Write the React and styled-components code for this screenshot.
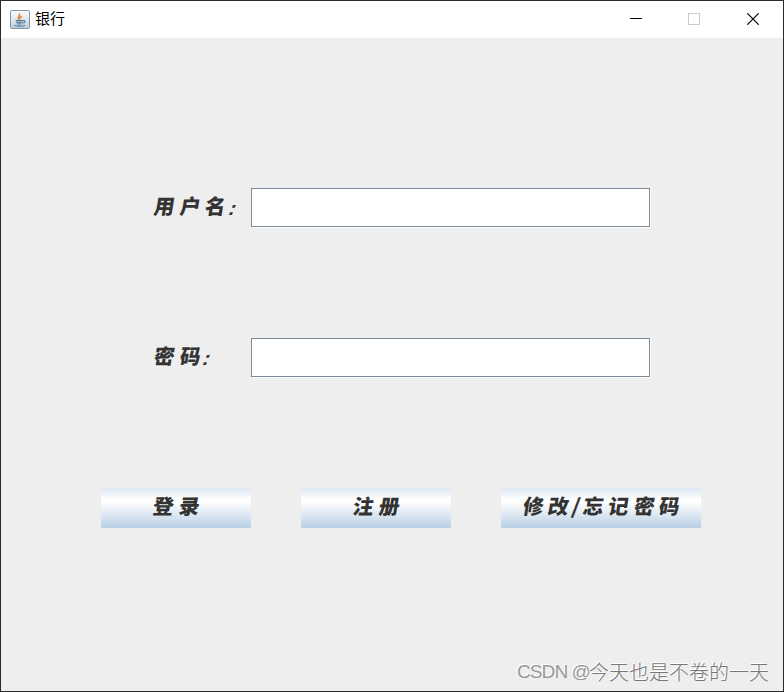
import styled, { createGlobalStyle } from "styled-components";

const fields = [
  { name: "username", label: "用户名" },
  { name: "password", label: "密码" },
];

const actions = [
  { label: "登录", width: 150 },
  { label: "注册", width: 150 },
  { label: "修改/忘记密码", width: 200 },
];

const JavaIcon = () => (
  <svg width="20" height="20" viewBox="0 0 20 20" aria-hidden="true">
    <defs>
      <linearGradient id="tile" x1="0" y1="0" x2="0" y2="1">
        <stop offset="0" stopColor="#fbfcfd" />
        <stop offset="0.5" stopColor="#e2e8ec" />
        <stop offset="1" stopColor="#bccbd6" />
      </linearGradient>
    </defs>
    <rect x="0.5" y="0.5" width="19" height="18" rx="1.5" fill="url(#tile)" stroke="#7f9aad" />
    <path
      d="M9.2 9.4C6.3 7.2 10.8 6.3 9.4 3.3M10 9.6c-1-1.7.2-2.4 2-3.4"
      fill="none"
      stroke="#e8853f"
      strokeWidth="1.6"
    />
    <path
      d="M5.5 10.5h8M6 12.2h6.8M7 13.8h4.5M13 10.5c3-.5 2.2 2.4-.3 2.4M4.3 15.2c2.5 1.4 8.5 1.3 10.6 0"
      fill="none"
      stroke="#557f9f"
      strokeWidth="1.2"
    />
  </svg>
);

const Brush = ({ text }) => (
  <BrushText>
    {[...text].map((char, index) => (
      <Glyph key={index} $narrow={char === "/"}>
        {char}
      </Glyph>
    ))}
  </BrushText>
);

const App = () => {
  return (
    <>
      <GlobalStyle />
      <Window>
        <TitleBar>
          <JavaIcon />
          <Title>银行</Title>
          <Controls>
            <Control aria-label="minimize">
              <svg width="12" height="12" shapeRendering="crispEdges">
                <path d="M0 5.5h12" stroke="#000" />
              </svg>
            </Control>
            <Control aria-label="maximize" disabled>
              <svg width="12" height="12" shapeRendering="crispEdges">
                <rect x="0.5" y="0.5" width="11" height="11" fill="none" stroke="#ccc" />
              </svg>
            </Control>
            <Control aria-label="close">
              <svg width="12" height="12">
                <path d="M.3.3l11.4 11.4M11.7.3L.3 11.7" stroke="#000" strokeWidth="1.2" />
              </svg>
            </Control>
          </Controls>
        </TitleBar>
        <Form>
          {fields.map(({ name, label }) => (
            <Field key={name}>
              <Label htmlFor={name}>
                <Brush text={label} />
                <Colon>:</Colon>
              </Label>
              <Input id={name} type={name === "password" ? "password" : "text"} />
            </Field>
          ))}
          <Actions>
            {actions.map(({ label, width }) => (
              <Button key={label} type="button" $width={width}>
                <Brush text={label} />
              </Button>
            ))}
          </Actions>
        </Form>
        <Watermark>
          <Handle>CSDN @</Handle>今天也是不卷的一天
        </Watermark>
      </Window>
    </>
  );
};

const GlobalStyle = createGlobalStyle`
  * {
    box-sizing: border-box;
  }

  body {
    margin: 0;
    overflow: hidden;
    font-family: "Liberation Sans", "Noto Sans CJK SC", sans-serif;
  }
`;

const Window = styled.main`
  display: flex;
  flex-direction: column;
  width: 784px;
  height: 692px;
  border: 1px solid #2b2b2b;
  background: #eee;
`;

const TitleBar = styled.header`
  display: flex;
  align-items: center;
  flex: 0 0 37px;
  padding-left: 9px;
  background: #fff;
`;

const Title = styled.span`
  margin: 0 0 3px 5px;
  font: 15px/20px "Noto Sans CJK SC", sans-serif;
  color: #000;
`;

const Controls = styled.div`
  display: flex;
  height: 100%;
  margin-left: auto;
  padding: 0 1px 1px 0;
`;

const Control = styled.button`
  display: flex;
  align-items: center;
  justify-content: center;
  width: 58.5px;
  padding: 0;
  border: 0;
  background: none;
`;

const Form = styled.form`
  display: flex;
  flex-direction: column;
  flex: 1;
  padding: 150px 0 0 100px;
`;

const Field = styled.div`
  display: flex;
  height: 39px;
  margin-bottom: 111px;
`;

const Label = styled.label`
  display: flex;
  align-items: center;
  width: 150px;
  padding: 0 0 5px 51px;
  color: #333;
`;

const BrushText = styled.span`
  display: inline-flex;
  font: 900 20.5px/24px "Noto Sans CJK SC", sans-serif;
  color: #333;
`;

const Glyph = styled.span`
  width: ${({ $narrow }) => ($narrow ? "9px" : "25.5px")};
  text-align: center;
  transform: skewX(-9deg);
`;

const Colon = styled.span`
  margin-left: 2px;
  padding-top: 6px;
  font: bold 20px/24px "Liberation Sans", sans-serif;
  transform: skewX(-22deg);
`;

const Input = styled.input`
  width: 399px;
  height: 39px;
  padding: 0 4px;
  border: 1px solid #7a8a99;
  border-radius: 0;
  outline: 0;
  background: #fff;
  box-shadow: 1px 1px 0 #fff;
`;

const Actions = styled.div`
  display: flex;
  gap: 50px;
`;

const Button = styled.button`
  display: flex;
  align-items: center;
  justify-content: center;
  width: ${({ $width }) => $width}px;
  height: 40px;
  padding: 0 0 6px 1px;
  border: 0;
  background: linear-gradient(#dde8f3 0%, #fff 30%, #fff 35%, #b8cfe5 100%);
`;

const Watermark = styled.footer`
  display: flex;
  align-items: center;
  align-self: flex-end;
  height: 38px;
  padding-right: 14px;
  font: 300 20px/28px "Noto Sans CJK SC", sans-serif;
  color: #777;
  text-shadow: -1px -1px 0 #fff;
`;

const Handle = styled.span`
  margin-right: -1px;
  font-family: "Liberation Sans", sans-serif;
  font-size: 19px;
  letter-spacing: -0.9px;
  color: #999;
`;

export default App;
